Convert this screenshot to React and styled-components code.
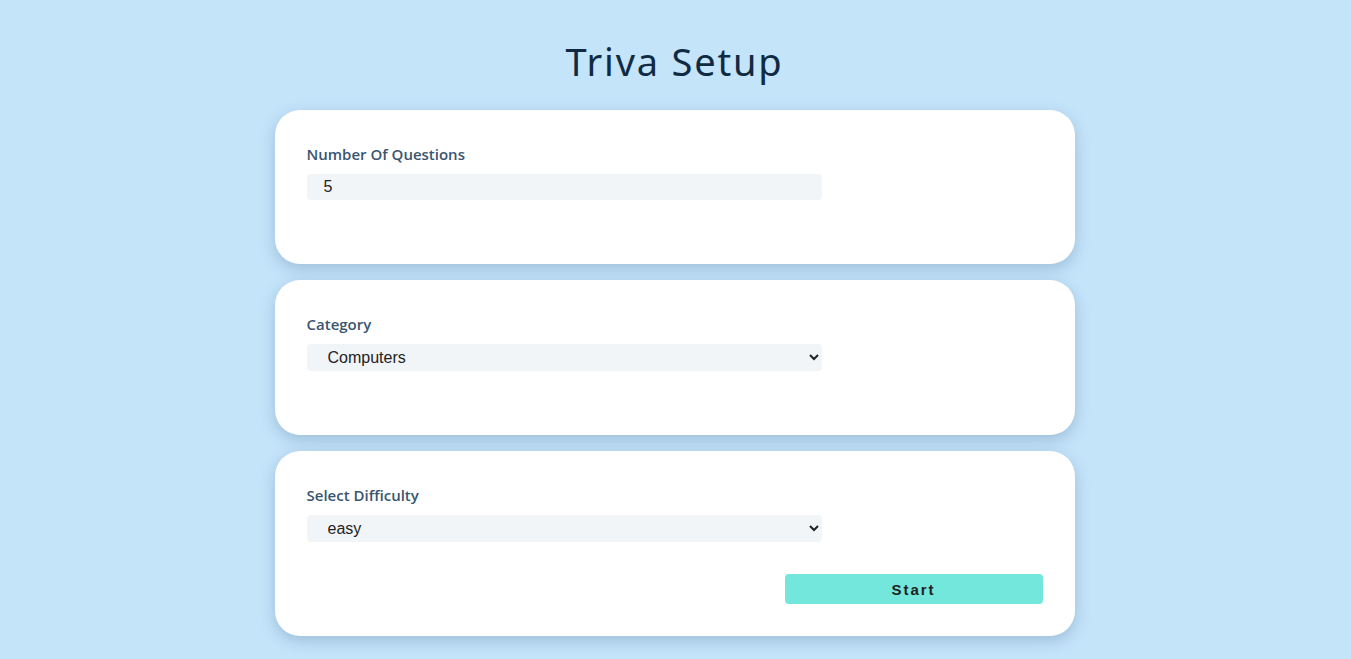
import React, { useState } from 'react'
import styled, { createGlobalStyle } from 'styled-components'

const GlobalStyle = createGlobalStyle`
*{
  box-sizing: border-box;
  margin: 0;
  padding: 0;
}
body{
  background: #c4e4fa;
  font-family: 'Open Sans', 'Noto Sans', sans-serif;
  color: #102a42;
}
`

const Page = styled.main`
min-height: 100vh;
padding: 36px 2px 0 0;
display: flex;
flex-direction: column;
align-items: center;
`

const Title = styled.h2`
font-family: 'Noto Sans', sans-serif;
font-weight: 400;
font-size: 38px;
line-height: 50px;
letter-spacing: 1.8px;
color: #102a42;
margin-bottom: 24px;
`

const Form = styled.form`
width: 800px;
display: flex;
flex-direction: column;
gap: 16px;
`

const Card = styled.section`
background: #fff;
border-radius: 25px;
padding: 32px;
box-shadow: 0 5px 15px rgba(40, 80, 120, 0.25);
`

const Label = styled.label`
display: block;
font-size: 15px;
line-height: 24px;
font-weight: 600;
color: #3a5570;
margin-bottom: 8px;
`

const Field = styled.div`
margin-bottom: 32px;
`

const Control = `
display: block;
width: 515px;
border: none;
border-radius: 4px;
background: #f1f5f8;
padding: 0 16px 0 17px;
font-family: 'Liberation Sans', Arial, sans-serif;
font-size: 16px;
color: #222;
outline: none;
`

const Input = styled.input`
${Control}
height: 26px;
`

const Select = styled.select`
${Control}
height: 27px;
`

const Actions = styled.div`
display: flex;
justify-content: flex-end;
`

const StartButton = styled.button`
width: 258px;
height: 30px;
border: none;
border-radius: 4px;
background: #74e7dc;
font-family: 'Liberation Sans', Arial, sans-serif;
font-weight: 700;
font-size: 15px;
letter-spacing: 2px;
color: #222;
cursor: pointer;
`

const App = () => {
  const [amount, setAmount] = useState(5)
  const [category, setCategory] = useState('computers')
  const [difficulty, setDifficulty] = useState('easy')

  return (
    <>
      <GlobalStyle />
      <Page>
        <Title>Triva Setup</Title>
        <Form onSubmit={e => e.preventDefault()}>
          <Card>
            <Field>
              <Label htmlFor="amount">Number Of Questions</Label>
              <Input
                id="amount"
                type="text"
                value={amount}
                onChange={e => setAmount(e.target.value)}
              />
            </Field>
          </Card>

          <Card>
            <Field>
              <Label htmlFor="category">Category</Label>
              <Select
                id="category"
                value={category}
                onChange={e => setCategory(e.target.value)}
              >
                <option value="computers">Computers</option>
                <option value="sports">Sports</option>
                <option value="history">History</option>
                <option value="politics">Politics</option>
              </Select>
            </Field>
          </Card>

          <Card>
            <Field>
              <Label htmlFor="difficulty">Select Difficulty</Label>
              <Select
                id="difficulty"
                value={difficulty}
                onChange={e => setDifficulty(e.target.value)}
              >
                <option value="easy">easy</option>
                <option value="medium">medium</option>
                <option value="hard">hard</option>
              </Select>
            </Field>
            <Actions>
              <StartButton type="submit">Start</StartButton>
            </Actions>
          </Card>
        </Form>
      </Page>
    </>
  )
}

export default App
